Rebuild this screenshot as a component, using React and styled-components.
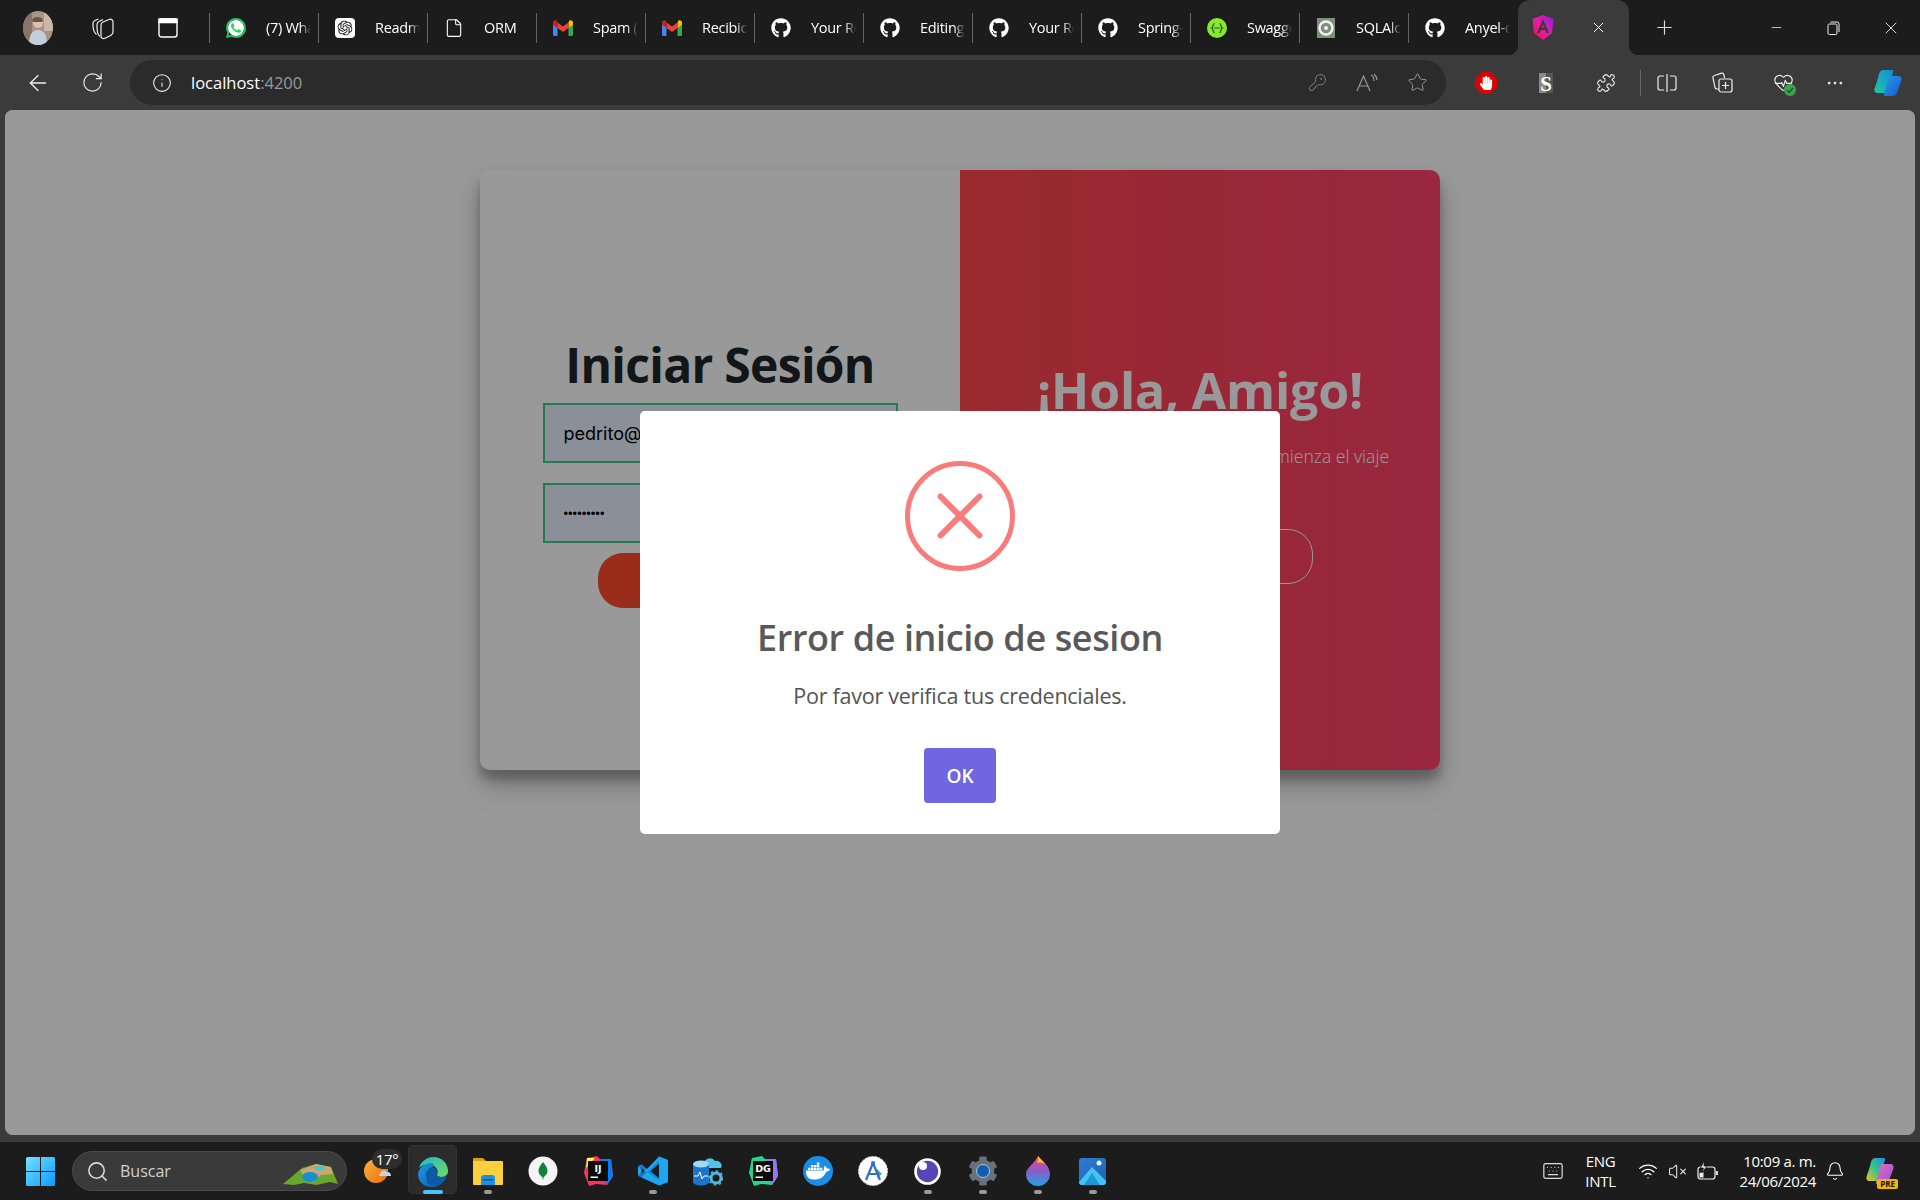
import React from 'react';
import styled, { createGlobalStyle } from 'styled-components';
import {
  ArrowLeft, RotateCw, Info, KeyRound, Star, Puzzle, HeartPulse, Ellipsis, File, X, Plus, Minus,
  Keyboard, Wifi, VolumeX, Bell, Search,
} from 'lucide-react';
import { SiWhatsapp, SiOpenai, SiDocker } from 'react-icons/si';
import { FaGithub, FaHandPaper, FaCog } from 'react-icons/fa';

const GlobalStyle = createGlobalStyle`
  html, body { margin: 0; padding: 0; background: #1c1c1c; }
  body { font-family: "Open Sans", "Noto Sans", sans-serif; }
  * { box-sizing: border-box; }
`;

const Shell = styled.div`
  width: 1920px;
  height: 1200px;
  display: flex;
  flex-direction: column;
  overflow: hidden;
`;

/* ---------- tab strip ---------- */
const TabStrip = styled.div`
  height: 55px;
  flex: none;
  background: #1c1c1c;
  display: flex;
  align-items: center;
  padding-left: 5px;
  color: #fff;
`;

const LeadSlot = styled.div`
  width: 65px;
  height: 55px;
  display: flex;
  align-items: center;
  justify-content: center;
`;

const Tabs = styled.div`
  display: flex;
  margin-left: 9px;
`;

const Tab = styled.div`
  width: 109px;
  height: 30px;
  border-left: 1px solid #666;
  padding-left: 16px;
  display: flex;
  align-items: center;
  gap: 20px;
`;

const TabIcon = styled.div`
  width: 20px;
  height: 20px;
  flex: none;
  display: flex;
  align-items: center;
  justify-content: center;
`;

const TabLabel = styled.span`
  width: 45px;
  overflow: hidden;
  white-space: nowrap;
  font-size: 14.5px;
  letter-spacing: -0.3px;
  color: #fff;
  -webkit-mask-image: linear-gradient(to right, #000 75%, transparent 100%);
  mask-image: linear-gradient(to right, #000 75%, transparent 100%);
`;

const ActiveTab = styled.div`
  position: relative;
  width: 111px;
  height: 55px;
  margin-left: 1px;
  background: #3b3b3b;
  border-radius: 12px 12px 0 0;
  display: flex;
  align-items: center;
  padding-left: 14px;
  gap: 36px;

  &::before, &::after {
    content: "";
    position: absolute;
    bottom: 0;
    width: 10px;
    height: 10px;
  }
  &::before {
    left: -10px;
    background: radial-gradient(circle at 0 0, transparent 10px, #3b3b3b 10.5px);
  }
  &::after {
    right: -10px;
    background: radial-gradient(circle at 100% 0, transparent 10px, #3b3b3b 10.5px);
  }
`;

const NewTab = styled.div`
  margin-left: 15px;
  width: 40px;
  display: flex;
  justify-content: center;
`;

const WindowControls = styled.div`
  margin-left: auto;
  display: flex;
`;

const WindowButton = styled.div`
  width: 57.5px;
  height: 55px;
  display: flex;
  align-items: center;
  justify-content: center;
`;

/* ---------- address row ---------- */
const Toolbar = styled.div`
  height: 55px;
  flex: none;
  background: #3b3b3b;
  display: flex;
  align-items: center;
  padding-left: 10px;
  color: #eee;
`;

const ToolButton = styled.div`
  width: ${(p) => p.$w || 55}px;
  height: 45px;
  flex: none;
  display: flex;
  align-items: center;
  justify-content: center;
`;

const AddressBar = styled.div`
  width: 1316px;
  height: 45px;
  margin: 0 10px;
  border-radius: 23px;
  background: #2b2b2b;
  display: flex;
  align-items: center;
  padding: 0 4px 0 22px;
  flex: none;
`;

const Url = styled.div`
  margin-left: 19px;
  font-size: 16.5px;
  color: #fff;
  flex: 1;

  span { color: #9a9a9a; }
`;

const ToolDivider = styled.div`
  width: 1px;
  height: 26px;
  margin: 0 3px 0 4px;
  background: #666;
  flex: none;
`;

/* ---------- page ---------- */
const Viewport = styled.div`
  flex: 1;
  background: #3b3b3b;
  padding: 0 5px 7px;
  min-height: 0;
`;

const Page = styled.main`
  position: relative;
  height: 100%;
  background: #fff;
  border-radius: 8px;
  overflow: hidden;
  padding-top: 60px;
`;

const Card = styled.section`
  width: 960px;
  height: 600px;
  margin: 0 auto;
  display: grid;
  grid-template-columns: 1fr 1fr;
  border-radius: 10px;
  overflow: hidden;
  background: #fff;
  box-shadow: 0 14px 28px rgba(0, 0, 0, 0.25), 0 10px 10px rgba(0, 0, 0, 0.22);
`;

const LoginPanel = styled.form`
  display: flex;
  flex-direction: column;
  align-items: center;
  justify-content: center;
`;

const LoginTitle = styled.h1`
  margin: 0;
  padding-bottom: 6px;
  font-size: 48px;
  line-height: 65px;
  font-weight: 700;
  color: #212529;
  letter-spacing: -0.7px;
`;

const Field = styled.input`
  width: 355px;
  height: 60px;
  margin-bottom: 20px;
  padding: 0 19px;
  border: 2px solid #3ecb85;
  background: #e8f0fe;
  color: #000;
  outline: none;
  font-family: ${(p) => (p.type === 'password' ? '"Liberation Sans"' : 'Inter')}, sans-serif;
  font-size: ${(p) => (p.type === 'password' ? 13 : 18)}px;
`;

const SubmitButton = styled.button`
  width: 244px;
  height: 55px;
  margin-top: -10px;
  border: none;
  border-radius: 25px;
  background: #ff4b2b;
  color: #fff;
  font: 700 15px "Open Sans", sans-serif;
`;

/* the gradient runs over twice the panel's width, only its second half shows */
const WelcomePanel = styled.div`
  background: linear-gradient(to right, #ff4b2b, #ff416c);
  background-size: 200% 100%;
  background-position: right center;
  color: #fff;
  display: flex;
  flex-direction: column;
  align-items: center;
  justify-content: center;
  text-align: center;
`;

const WelcomeTitle = styled.h2`
  margin: 0;
  font-size: 50px;
  line-height: 68px;
  font-weight: 700;
  letter-spacing: -0.2px;
`;

const WelcomeText = styled.p`
  margin: 16.5px 0 28.5px;
  font-size: 17.6px;
  line-height: 30px;
  font-weight: 300;
`;

const GhostButton = styled.button`
  width: 226px;
  height: 55px;
  border: 1px solid #fff;
  border-radius: 25px;
  background: transparent;
  color: #fff;
  font: 700 15px "Open Sans", sans-serif;
`;

/* ---------- error dialog ---------- */
const Backdrop = styled.div`
  position: absolute;
  inset: 0;
  background: rgba(0, 0, 0, 0.4);
  display: flex;
  align-items: center;
  justify-content: center;
`;

const Dialog = styled.div`
  width: 640px;
  padding: 50px 0 31px;
  background: #fff;
  border-radius: 5px;
  display: flex;
  flex-direction: column;
  align-items: center;
`;

const DialogTitle = styled.h2`
  margin: 49px 0 0;
  font-size: 36px;
  line-height: 36px;
  font-weight: 600;
  color: #595959;
  letter-spacing: -0.4px;
`;

const DialogText = styled.p`
  margin: 27px 0 0;
  font-size: 21.5px;
  line-height: 26px;
  color: #545454;
  letter-spacing: -0.25px;
`;

const DialogButton = styled.button`
  width: 72px;
  height: 55px;
  margin-top: 39px;
  border: none;
  border-radius: 4px;
  background: #7066e0;
  color: #fff;
  font: 600 19px "Open Sans", sans-serif;
`;

/* ---------- taskbar ---------- */
const Taskbar = styled.footer`
  height: 58px;
  flex: none;
  background: #1c1c1c;
  display: flex;
  align-items: center;
  color: #fff;
  padding-left: 12px;
`;

const StartSlot = styled.div`
  width: 57px;
  margin-right: 3px;
  display: flex;
  justify-content: center;
`;

const SearchBox = styled.div`
  position: relative;
  width: 275px;
  height: 40px;
  border-radius: 20px;
  background: #3a3a3a;
  border: 1px solid #4a4a4a;
  display: flex;
  align-items: center;
  padding-left: 13px;
  gap: 11px;
  color: #d0d0d0;
  font-size: 16px;
`;

const SearchArt = styled.div`
  position: absolute;
  right: 8px;
  bottom: 4px;
  line-height: 0;
`;

const WeatherSlot = styled.div`
  position: relative;
  width: 58px;
  height: 58px;
  display: flex;
  align-items: center;
  padding-left: 17px;
`;

const WeatherBadge = styled.span`
  position: absolute;
  left: 25px;
  top: 7px;
  width: 30px;
  height: 20px;
  border-radius: 10px;
  background: #2e2e2e;
  font-size: 15px;
  line-height: 20px;
  letter-spacing: -0.3px;
  text-align: center;
  color: #fff;
`;

const AppSlot = styled.div`
  position: relative;
  width: 55px;
  height: 58px;
  display: flex;
  align-items: center;
  justify-content: center;

  ${(p) => p.$active && `
    &::before {
      content: "";
      position: absolute;
      left: 3px;
      right: 3px;
      top: 3px;
      bottom: 6px;
      background: #2b2b2b;
      border: 1px solid #333;
      border-radius: 5px;
    }
  `}
  svg { position: relative; }
`;

const RunDot = styled.span`
  position: absolute;
  bottom: 6px;
  left: 50%;
  transform: translateX(-50%);
  width: ${(p) => (p.$active ? 20 : 8)}px;
  height: 4px;
  border-radius: 2px;
  background: ${(p) => (p.$active ? '#4cc2ff' : '#9a9a9a')};
`;

const Tray = styled.div`
  margin-left: auto;
  display: flex;
  align-items: center;
  padding-right: 14px;
`;

const TraySlot = styled.div`
  width: ${(p) => p.$w}px;
  margin-left: ${(p) => p.$ml || 0}px;
  display: flex;
  justify-content: center;
`;

const TrayText = styled.div`
  width: ${(p) => p.$w}px;
  font-size: 15px;
  line-height: 20px;
  letter-spacing: -0.3px;
  white-space: nowrap;
  text-align: ${(p) => p.$align};
`;

const PreBadge = styled.span`
  position: absolute;
  right: -4px;
  bottom: -4px;
  padding: 0 3px;
  border-radius: 2px;
  background: #f5b400;
  color: #111;
  font-size: 8px;
  line-height: 10px;
  font-weight: 700;
`;

/* ---------- drawings ---------- */
const Avatar = () => (
  <svg width="30" height="34" viewBox="0 0 30 34">
    <defs>
      <clipPath id="av"><ellipse cx="15" cy="17" rx="15" ry="17" /></clipPath>
    </defs>
    <g clipPath="url(#av)">
      <rect width="30" height="34" fill="#a89486" />
      <rect x="0" width="9" height="34" fill="#8a7468" />
      <rect x="21" width="9" height="20" fill="#c9b8a6" />
      <circle cx="15" cy="12" r="5" fill="#dcc0b0" />
      <path d="M6 34c0-10 3-15 9-15s9 5 9 15z" fill="#c4cfdc" />
      <path d="M9 9c2-4 9-4 11 0l-1 2H10z" fill="#6a5448" />
    </g>
  </svg>
);

const Gmail = () => (
  <svg width="20" height="16" viewBox="0 0 20 16">
    <path d="M0 3v11.5A1.5 1.5 0 0 0 1.500 16H4.500V7z" fill="#4285f4" />
    <path d="M20 3v11.500A1.500 1.500 0 0 1 18.500 16H15.500V7z" fill="#34a853" />
    <path d="M15.500 2.500V8L20 4.700V2.500C20 .6 17.800-.5 16.300.7z" fill="#fbbc04" />
    <path d="M4.500 8V2.500L10 6.500l5.500-4V8L10 12z" fill="#ea4335" />
    <path d="M0 2.500v2.200L4.500 8V2.500L3.700.7C2.200-.5 0 .6 0 2.500z" fill="#c5221f" />
  </svg>
);

const Whatsapp = () => (
  <span style={{ position: 'relative', display: 'flex' }}>
    <svg width="20" height="20" viewBox="0 0 20 20" style={{ position: 'absolute' }}><circle cx="10" cy="10" r="8" fill="#fff" /></svg>
    <SiWhatsapp size={20} color="#25d366" style={{ position: 'relative' }} />
  </span>
);

const OpenAi = () => (
  <svg width="20" height="20" viewBox="0 0 20 20">
    <rect width="20" height="20" rx="4" fill="#fff" />
    <SiOpenai x="2.500" y="2.500" size={15} color="#111" />
  </svg>
);

const Swagger = () => (
  <svg width="20" height="20" viewBox="0 0 20 20">
    <circle cx="10" cy="10" r="10" fill="#85ea2d" />
    <path d="M7.500 5.500C5.500 5.500 6.500 9.500 4.800 10c1.700.5.7 4.500 2.700 4.500M12.500 5.500c2 0 1 4 2.700 4.500-1.700.5-.7 4.500-2.700 4.500" fill="none" stroke="#2b4a22" strokeWidth="1.200" />
    <circle cx="8" cy="10" r=".8" fill="#2b4a22" />
    <circle cx="10" cy="10" r=".8" fill="#2b4a22" />
    <circle cx="12" cy="10" r=".8" fill="#2b4a22" />
  </svg>
);

const SqlAlchemy = () => (
  <svg width="20" height="20" viewBox="0 0 20 20">
    <rect x="1" width="18" height="20" fill="#7e9079" />
    <circle cx="10" cy="10" r="6.500" fill="none" stroke="#f2f2f2" strokeWidth="2.400" />
    <circle cx="10" cy="10" r="2" fill="#f2f2f2" />
  </svg>
);

const Angular = () => (
  <svg width="22" height="25" viewBox="0 0 22 25">
    <defs>
      <linearGradient id="ng" x1="0" y1="1" x2="1" y2="0">
        <stop offset="0" stopColor="#f0103c" />
        <stop offset=".5" stopColor="#e81ca8" />
        <stop offset="1" stopColor="#8a1fe0" />
      </linearGradient>
    </defs>
    <path d="M11 0 21.500 4 20 18l-9 7-9-7L.5 4z" fill="url(#ng)" />
    <path d="M11 4 5 18h2.600l1.200-3h4.400l1.200 3H17zM9.700 12.500 11 9l1.300 3.500z" fill="#3b3b3b" />
  </svg>
);

const StopHand = () => (
  <span style={{ position: 'relative', display: 'flex', width: 22, height: 22, alignItems: 'center', justifyContent: 'center' }}>
    <svg width="22" height="22" viewBox="0 0 22 22" style={{ position: 'absolute' }}>
      <polygon points="7,0 15,0 22,7 22,15 15,22 7,22 0,15 0,7" fill="#e00000" />
    </svg>
    <FaHandPaper size={14} color="#fff" style={{ position: 'relative' }} />
  </span>
);

const SExtension = () => (
  <svg width="14" height="20" viewBox="0 0 14 20">
    <rect width="7" height="20" fill="#8a8a8a" />
    <rect x="7" width="7" height="20" fill="#555" />
    <text x="7" y="17.500" textAnchor="middle" fontFamily="Liberation Serif" fontWeight="700" fontSize="21" fill="#fff">S</text>
  </svg>
);

const SplitScreen = () => (
  <svg width="20" height="20" viewBox="0 0 20 20" fill="none" stroke="#eee" strokeWidth="1.200">
    <path d="M7 3H3a2 2 0 0 0-2 2v10a2 2 0 0 0 2 2h4M13 3h4a2 2 0 0 1 2 2v10a2 2 0 0 1-2 2h-4M10 1v18" />
  </svg>
);

const Collections = () => (
  <svg width="21" height="21" viewBox="0 0 21 21" fill="none" stroke="#eee" strokeWidth="1.200">
    <path d="M7 17H5a2 2 0 0 1-2-1.500L1 6a2 2 0 0 1 1.500-2.500L9.500 1.200a2 2 0 0 1 2.400 1.300L12.500 6" />
    <rect x="7" y="7" width="13" height="13" rx="2" />
    <path d="M13.500 10v7M10 13.500h7" />
  </svg>
);

const Health = () => (
  <span style={{ position: 'relative', display: 'flex' }}>
    <HeartPulse size={21} strokeWidth={1.300} color="#eee" />
    <svg width="12" height="12" viewBox="0 0 12 12" style={{ position: 'absolute', right: -2, bottom: -3 }}>
      <circle cx="6" cy="6" r="6" fill="#3fa34d" />
      <path d="M3 6.200 5.200 8.300 9 4" stroke="#153" strokeWidth="1.300" fill="none" />
    </svg>
  </span>
);

const Copilot = ({ size = 28 }) => (
  <svg width={size} height={size} viewBox="0 0 28 28">
    <defs>
      <linearGradient id="cpA" x1="0" y1="1" x2="1" y2="0">
        <stop offset="0" stopColor="#1ec8a0" />
        <stop offset="1" stopColor="#0f8fe0" />
      </linearGradient>
      <linearGradient id="cpB" x1="0" y1="0" x2="1" y2="1">
        <stop offset="0" stopColor="#2a9cf0" />
        <stop offset="1" stopColor="#1556c8" />
      </linearGradient>
    </defs>
    <path d="M9 1h9c1 0 1.500 1 1 2l-6 19c-.5 1.500-1.500 2-3 2H4c-3 0-4-2-3.500-4 1-4 3-8 4-13C5 3 7 1 9 1z" fill="url(#cpA)" />
    <path d="M15 7h9c3 0 4 2 3.500 4-1 4-3 8-4 11.500-.5 2.500-2.500 4.500-5 4.500H11c-1 0-1.500-1-1-2l2-6z" fill="url(#cpB)" />
  </svg>
);

const CopilotPre = () => (
  <svg width="28" height="28" viewBox="0 0 28 28">
    <defs>
      <linearGradient id="cqA" x1="0" y1="1" x2="1" y2="0">
        <stop offset="0" stopColor="#f5c518" />
        <stop offset=".5" stopColor="#35c48f" />
        <stop offset="1" stopColor="#1c8fe8" />
      </linearGradient>
      <linearGradient id="cqB" x1="0" y1="0" x2="1" y2="1">
        <stop offset="0" stopColor="#f06ab8" />
        <stop offset="1" stopColor="#8c52e0" />
      </linearGradient>
    </defs>
    <path d="M9 1h9c1 0 1.500 1 1 2l-6 19c-.5 1.500-1.500 2-3 2H4c-3 0-4-2-3.500-4 1-4 3-8 4-13C5 3 7 1 9 1z" fill="url(#cqA)" />
    <path d="M15 7h9c3 0 4 2 3.500 4-1 4-3 8-4 11.500-.5 2.500-2.500 4.500-5 4.500H11c-1 0-1.500-1-1-2l2-6z" fill="url(#cqB)" />
  </svg>
);

const WinLogo = () => (
  <svg width="29" height="29" viewBox="0 0 29 29">
    <defs>
      <linearGradient id="win" x1="0" y1="0" x2="1" y2="1">
        <stop offset="0" stopColor="#74e0ff" />
        <stop offset="1" stopColor="#0a9cff" />
      </linearGradient>
    </defs>
    <path d="M1.500 0H14v14H0V1.500A1.500 1.500 0 0 1 1.500 0zM15 0h12.500A1.500 1.500 0 0 1 29 1.500V14H15zM0 15h14v14H1.500A1.500 1.500 0 0 1 0 27.500zM15 15h14v12.500a1.500 1.500 0 0 1-1.500 1.500H15z" fill="url(#win)" />
  </svg>
);

const MountainArt = () => (
  <svg width="55" height="22" viewBox="0 0 55 22">
    <path d="M0 20 19 4 33 0l15 3 7 17-8-2-14 3-12-2-10 2z" fill="#6aa52c" />
    <path d="M17 6 33 0l15 3 2 7-12 1-8 7-8-4z" fill="#c9a672" />
    <path d="M30 3l10-1 2 3-7 2z" fill="#3fc6d0" />
    <ellipse cx="27" cy="13" rx="8" ry="5" fill="#1a8fd0" />
  </svg>
);

const Weather = () => (
  <svg width="30" height="28" viewBox="0 0 30 28">
    <defs>
      <linearGradient id="sun" x1="0" y1="0" x2="1" y2="1">
        <stop offset="0" stopColor="#fbb040" />
        <stop offset="1" stopColor="#ee6d0c" />
      </linearGradient>
    </defs>
    <circle cx="12" cy="14" r="12" fill="url(#sun)" />
    <path d="M16 17a4 4 0 0 1 7-2 3.500 3.500 0 0 1 4 4H15a2 2 0 0 1 1-2z" fill="#c2d2ea" />
  </svg>
);

const Edge = () => (
  <svg width="30" height="31" viewBox="0 0 30 31">
    <defs>
      <linearGradient id="edA" x1="0" y1="0" x2="1" y2="1">
        <stop offset="0" stopColor="#29b3c8" />
        <stop offset="1" stopColor="#6ede62" />
      </linearGradient>
      <linearGradient id="edB" x1="0" y1="0" x2="1" y2="1">
        <stop offset="0" stopColor="#1a9be0" />
        <stop offset="1" stopColor="#0c5fb8" />
      </linearGradient>
    </defs>
    <path d="M1 12C3 5 9 1 15.500 1 24 1 30 7.500 30 15c0 4-3 6-6.500 6-2.500 0-5-1-4.500-2.500 1-1.500 1-4-.5-6C16 9 12 7 8 8.500 5 9.500 2.500 10.500 1 12z" fill="url(#edA)" />
    <path d="M14 7C6 7 0 13 0 18.500 0 25.500 6 31 14 31c3.500 0 7-1 9-3-2 .5-4 .5-6 0-5-1-9-5-8.500-10 .3-3.500 3-6 5.500-6.500 2-.5 2-4.500.5-4.500z" fill="url(#edB)" />
    <path d="M8.500 18c.3-3.500 3-6 5.500-6.500 2-.4 3.500.8 4.500 2.500.5 1.500.5 3.300 0 4.500 0 1.500 2.500 2.500 4.500 2.500 2.500 0 5-1 6-3-1 6-5 12-13 12-3 0-4-1-6-2-2-2-1-6-1.500-10z" fill="#0b5ba8" />
  </svg>
);

const Folder = () => (
  <svg width="30" height="30" viewBox="0 0 30 30">
    <path d="M0 3a1 1 0 0 1 1-1h9l3 3h-13z" fill="#d79f1c" />
    <path d="M0 5h29a1 1 0 0 1 1 1v22a1 1 0 0 1-1 1H1a1 1 0 0 1-1-1z" fill="#fccf3e" />
    <path d="M8 29V22a3 3 0 0 1 3-3h8a3 3 0 0 1 3 3v7z" fill="#1f8fde" />
    <rect x="10" y="23" width="10" height="1.500" fill="#0f5aa5" />
  </svg>
);

const Mongo = () => (
  <svg width="30" height="30" viewBox="0 0 30 30">
    <circle cx="15" cy="15" r="14.500" fill="#f4f4f4" />
    <path d="M15 6c3 3.500 4.500 6 4.500 9 0 3.500-3 5-4 6.500l-.5 3-.5-3c-1-1.500-4-3-4-6.500 0-3 1.500-5.500 4.500-9z" fill="#10843f" />
  </svg>
);

const JetLogo = ({ label, colors }) => (
  <svg width="30" height="30" viewBox="0 0 30 30">
    <polygon points="4,2 14,0 17,3 28,3 30,20 24,29 13,28 6,30 1,17" fill={colors[0]} />
    <polygon points="17,3 28,3 30,20 24,29 20,22" fill={colors[1]} />
    <polygon points="4,2 12,2 3,12" fill={colors[2]} />
    <rect x="5" y="5" width="20" height="20" fill="#0a0a0a" />
    <text x="15" y="15.500" textAnchor="middle" fontFamily="DejaVu Sans" fontWeight="700" fontSize="9.500" fill="#fff">{label}</text>
    <rect x="7.500" y="20.500" width="7.500" height="1.500" fill="#fff" />
  </svg>
);

const VsCode = () => (
  <svg width="30" height="30" viewBox="0 0 30 30">
    <path d="M21 .5 30 4v22l-9 3.500L7 16l14-11z" fill="#0a8ad8" />
    <path d="M21 .5 9 13 3.500 8.500 0 10.500v9l3.500 2L21 5v19L9 16 3.500 21.500 21 29.500 30 26V4z" fill="#1fa6f0" />
    <path d="M21 8 12.500 15 21 22zM0 10.500l3.500-2L9 13l-4 2zM0 19.500l3.500 2L9 16l-4-1z" fill="#0e7ccc" />
    <path d="M21 8v14l-8.500-7z" fill="#1c1c1c" />
    <path d="M3.500 12l3 3-3 3z" fill="#1c1c1c" />
  </svg>
);

const DbCloud = () => (
  <svg width="31" height="32" viewBox="0 0 31 32">
    <path d="M12 9a6 6 0 0 1 11-3 5 5 0 0 1 6 7H12z" fill="#4fc3e8" />
    <path d="M1 9v18c0 2 4 3.500 8 3.500s8-1.500 8-3.500V9z" fill="#1976c8" />
    <ellipse cx="9" cy="9" rx="8" ry="3.500" fill="#9fdcf2" />
    <path d="M2 21h4l2-4 2 7 2-3h4" stroke="#fff" strokeWidth="1" fill="none" />
    <circle cx="24" cy="23" r="5" fill="none" stroke="#4fb8de" strokeWidth="3" />
    <circle cx="24" cy="23" r="7" fill="none" stroke="#4fb8de" strokeWidth="1.500" strokeDasharray="2.500 2.900" />
  </svg>
);

const Docker = () => (
  <span style={{ width: 30, height: 30, borderRadius: '50%', background: '#1a8ee6', display: 'flex', alignItems: 'center', justifyContent: 'center', position: 'relative' }}>
    <SiDocker size={24} color="#fff" />
  </span>
);

const Publisher = () => (
  <svg width="30" height="30" viewBox="0 0 30 30">
    <circle cx="15" cy="15" r="14.500" fill="#fff" stroke="#ddd" strokeDasharray="2 1.500" />
    <path d="M19 13l5 5-5 4z" fill="#43b05c" />
    <path d="M15 7 8 24M15 7l7 17M10.500 18h9" stroke="#2f6fd0" strokeWidth="2.200" fill="none" />
    <circle cx="15" cy="7" r="2" fill="#2f6fd0" />
  </svg>
);

const Eclipse = () => (
  <svg width="27" height="27" viewBox="0 0 27 27">
    <circle cx="13.500" cy="13.500" r="12" fill="#5a45b8" stroke="#fff" strokeWidth="2.600" />
    <circle cx="9" cy="8" r="4" fill="#fff" />
  </svg>
);

const Gear = () => (
  <span style={{ position: 'relative', display: 'flex', alignItems: 'center', justifyContent: 'center' }}>
    <FaCog size={30} color="#68727c" />
    <svg width="14" height="14" viewBox="0 0 14 14" style={{ position: 'absolute' }}>
      <circle cx="7" cy="7" r="6.500" fill="#0f5cb0" stroke="#a8c4de" strokeWidth="1" />
    </svg>
  </span>
);

const Drop = () => (
  <svg width="24" height="30" viewBox="0 0 24 30">
    <defs>
      <linearGradient id="dr" x1="0" y1="0" x2="0" y2="1">
        <stop offset="0" stopColor="#f0468c" />
        <stop offset=".5" stopColor="#8a5cc8" />
        <stop offset="1" stopColor="#1fa4e8" />
      </linearGradient>
    </defs>
    <path d="M12 0c2 3 12 9 12 18a12 12 0 0 1-24 0C0 12 8 8 12 0z" fill="url(#dr)" />
    <path d="M12 0c2 3 5 5 7 8-2-1-5-2-8-1 1-2 1-4 1-7z" fill="#fcc419" />
  </svg>
);

const Photos = () => (
  <svg width="27" height="27" viewBox="0 0 27 27">
    <defs>
      <linearGradient id="ph" x1="0" y1="0" x2="1" y2="1">
        <stop offset="0" stopColor="#2f7bd0" />
        <stop offset="1" stopColor="#1b62b8" />
      </linearGradient>
    </defs>
    <rect width="27" height="27" rx="3" fill="url(#ph)" />
    <circle cx="20" cy="5" r="2.500" fill="#e8f2ff" />
    <path d="M0 24 13 9l14 14v1a3 3 0 0 1-3 3H3a3 3 0 0 1-3-3z" fill="#42c5f0" />
    <path d="M13 15l8 12H5z" fill="#1f97d8" />
  </svg>
);

const BatteryBolt = () => (
  <svg width="22" height="22" viewBox="0 0 22 22" fill="none" stroke="#eee" strokeWidth="1.200">
    <rect x="1" y="7" width="17" height="12" rx="2.500" />
    <path d="M20 11v4" strokeWidth="1.800" />
    <path d="M2.500 17.500V13l4-1v5.500z" fill="#eee" stroke="none" />
    <path d="M7 1 3.500 8h3L5 13l5-7H7z" fill="#eee" stroke="#1c1c1c" strokeWidth=".8" />
  </svg>
);

const stroke = { strokeWidth: 1.300, color: '#eee' };

const tabs = [
  { icon: <Whatsapp />, label: '(7) WhatsApp' },
  { icon: <OpenAi />, label: 'Readme' },
  { icon: <File size={20} strokeWidth={1.300} color="#fff" />, label: 'ORM' },
  { icon: <Gmail />, label: 'Spam (1)' },
  { icon: <Gmail />, label: 'Recibidos' },
  { icon: <FaGithub size={20} color="#fff" />, label: 'Your Repositories' },
  { icon: <FaGithub size={20} color="#fff" />, label: 'Editing' },
  { icon: <FaGithub size={20} color="#fff" />, label: 'Your Repositories' },
  { icon: <FaGithub size={20} color="#fff" />, label: 'Spring-boot' },
  { icon: <Swagger />, label: 'Swagger' },
  { icon: <SqlAlchemy />, label: 'SQLAlchemy' },
  { icon: <FaGithub size={20} color="#fff" />, label: 'Anyel-dev' },
];

const apps = [
  { icon: <Edge />, active: true },
  { icon: <Folder />, dot: true },
  { icon: <Mongo /> },
  { icon: <JetLogo label="IJ" colors={['#fe315d', '#087cfa', '#fcf84a']} /> },
  { icon: <VsCode />, dot: true },
  { icon: <DbCloud /> },
  { icon: <JetLogo label="DG" colors={['#22d88f', '#9775f8', '#22d88f']} /> },
  { icon: <Docker /> },
  { icon: <Publisher /> },
  { icon: <Eclipse />, dot: true },
  { icon: <Gear />, dot: true },
  { icon: <Drop />, dot: true },
  { icon: <Photos />, dot: true },
];

const App = () => (
  <Shell>
    <GlobalStyle />
    <TabStrip>
      <LeadSlot><Avatar /></LeadSlot>
      <LeadSlot>
        <svg width="22" height="24" viewBox="0 0 22 24" fill="none" stroke="#eee" strokeWidth="1.200">
          <path d="M4.500 18.500C2.500 17 1 14 1 9V7.500C1 6 2 5 3 4.500L6.500 3" />
          <path d="M8 20.500C6 19 5 16 5 11V8.500C5 7 6 6 7 5.500L11 3.500" />
          <path d="M9 9c0-1.500.8-2.500 2-3l6-2.500c2-.8 4 .3 4 2.500v10c0 1.500-.8 2.500-2 3.300l-6 3c-2 1-4-.3-4-2.300z" />
        </svg>
      </LeadSlot>
      <LeadSlot>
        <svg width="20" height="20" viewBox="0 0 20 20" fill="none" stroke="#fff" strokeWidth="1.400">
          <rect x="1" y="1" width="18" height="18" rx="2.500" />
          <path d="M1 4.500h18V1H1z" fill="#fff" />
        </svg>
      </LeadSlot>
      <Tabs>
        {tabs.map((tab, i) => (
          <Tab key={i}>
            <TabIcon>{tab.icon}</TabIcon>
            <TabLabel>{tab.label}</TabLabel>
          </Tab>
        ))}
      </Tabs>
      <ActiveTab>
        <Angular />
        <X size={17} strokeWidth={1.400} color="#fff" />
      </ActiveTab>
      <NewTab><Plus size={23} strokeWidth={1.200} color="#ddd" /></NewTab>
      <WindowControls>
        <WindowButton><Minus size={15} strokeWidth={1.200} color="#eee" /></WindowButton>
        <WindowButton>
          <svg width="13" height="14" viewBox="0 0 13 14" fill="none" stroke="#eee" strokeWidth="1">
            <rect x="1" y="3" width="9" height="10.500" rx="1.500" />
            <path d="M3.500 1h6.500a2 2 0 0 1 2 2v8" />
          </svg>
        </WindowButton>
        <WindowButton><X size={20} strokeWidth={1.100} color="#eee" /></WindowButton>
      </WindowControls>
    </TabStrip>

    <Toolbar>
      <ToolButton><ArrowLeft size={26} strokeWidth={1.200} /></ToolButton>
      <ToolButton><RotateCw size={23} strokeWidth={1.200} /></ToolButton>
      <AddressBar>
        <Info size={20} strokeWidth={1.300} color="#eee" />
        <Url>localhost<span>:4200</span></Url>
        <ToolButton $w={50}><KeyRound size={19} strokeWidth={1.100} color="#8a8a8a" /></ToolButton>
        <ToolButton $w={50}>
          <svg width="22" height="20" viewBox="0 0 22 20" fill="none" stroke="#9a9a9a" strokeWidth="1.100">
            <path d="M1 18 7.500 3 14 18M3.500 13h8M15 2c2 1 3 3 3 6M18 1c2 2 3 4 3 6" />
          </svg>
        </ToolButton>
        <ToolButton $w={50}><Star size={21} strokeWidth={1.100} color="#9a9a9a" /></ToolButton>
      </AddressBar>
      <ToolButton $w={60}><StopHand /></ToolButton>
      <ToolButton $w={60}><SExtension /></ToolButton>
      <ToolButton $w={60}><Puzzle size={20} {...stroke} /></ToolButton>
      <ToolDivider />
      <ToolButton $w={46}><SplitScreen /></ToolButton>
      <ToolButton $w={65}><Collections /></ToolButton>
      <ToolButton $w={56}><Health /></ToolButton>
      <ToolButton $w={48}><Ellipsis size={20} {...stroke} /></ToolButton>
      <ToolButton $w={58}><Copilot /></ToolButton>
    </Toolbar>

    <Viewport>
      <Page>
        <Card>
          <LoginPanel>
            <LoginTitle>Iniciar Sesión</LoginTitle>
            <Field type="email" defaultValue="pedrito@gmail.com" readOnly />
            <Field type="password" defaultValue="123456789" readOnly />
            <SubmitButton type="button">Iniciar Sesión</SubmitButton>
          </LoginPanel>
          <WelcomePanel>
            <WelcomeTitle>¡Hola, Amigo!</WelcomeTitle>
            <WelcomeText>Ingresa tus datos personales y comienza el viaje<br />con nosotros</WelcomeText>
            <GhostButton type="button">Registrarse</GhostButton>
          </WelcomePanel>
        </Card>
        <Backdrop>
          <Dialog>
            <svg width="110" height="110" viewBox="0 0 110 110" fill="none" stroke="#f87c7c" strokeWidth="5">
              <circle cx="55" cy="55" r="52.500" />
              <path d="M35.500 35.500l39 39M74.500 35.500l-39 39" strokeLinecap="round" strokeWidth="6" />
            </svg>
            <DialogTitle>Error de inicio de sesion</DialogTitle>
            <DialogText>Por favor verifica tus credenciales.</DialogText>
            <DialogButton type="button">OK</DialogButton>
          </Dialog>
        </Backdrop>
      </Page>
    </Viewport>

    <Taskbar>
      <StartSlot><WinLogo /></StartSlot>
      <SearchBox>
        <Search size={23} strokeWidth={1.600} color="#d8d8d8" />
        Buscar
        <SearchArt><MountainArt /></SearchArt>
      </SearchBox>
      <WeatherSlot>
        <Weather />
        <WeatherBadge>17°</WeatherBadge>
      </WeatherSlot>
      {apps.map((app, i) => (
        <AppSlot key={i} $active={app.active}>
          {app.icon}
          {(app.dot || app.active) && <RunDot $active={app.active} />}
        </AppSlot>
      ))}
      <Tray>
        <TraySlot $w={46}><Keyboard size={22} strokeWidth={1.300} color="#ddd" /></TraySlot>
        <TrayText $w={49} $align="center">ENG<br />INTL</TrayText>
        <TraySlot $w={30} $ml={8}><Wifi size={20} strokeWidth={1.500} color="#fff" /></TraySlot>
        <TraySlot $w={29}><VolumeX size={19} strokeWidth={1.300} color="#eee" /></TraySlot>
        <TraySlot $w={32}><BatteryBolt /></TraySlot>
        <TrayText $w={92} $align="right">10:09 a. m.<br />24/06/2024</TrayText>
        <TraySlot $w={38}><Bell size={20} strokeWidth={1.300} color="#fff" /></TraySlot>
        <TraySlot $w={52}>
          <span style={{ position: 'relative', display: 'flex' }}>
            <CopilotPre />
            <PreBadge>PRE</PreBadge>
          </span>
        </TraySlot>
      </Tray>
    </Taskbar>
  </Shell>
);

export default App;
